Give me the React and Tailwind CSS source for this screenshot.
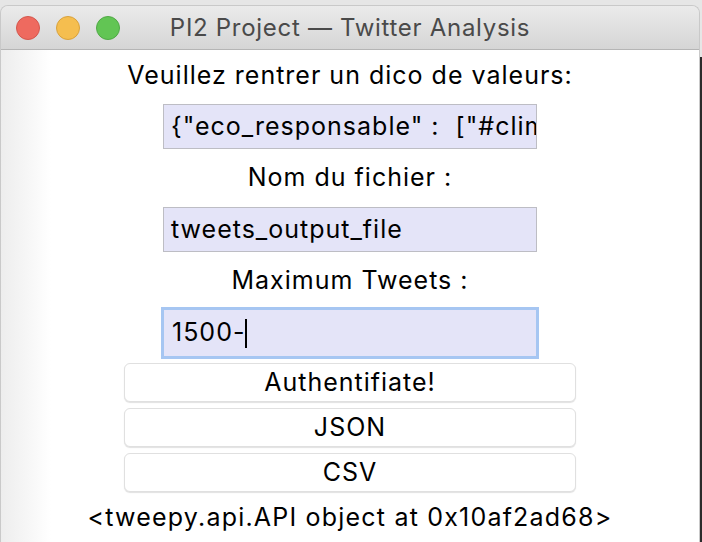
import React from 'react';

export default function App() {
  const buttons = ['Authentifiate!', 'JSON', 'CSV'];

  return (
    <div className="w-[702px] h-[542px] overflow-hidden bg-[#e6e6e6] flex pt-[5px]">
      <div className="w-[700px] h-full flex flex-col rounded-t-[8px] overflow-hidden border-t border-l border-r border-[#c9c9c9]">
        {/* title bar */}
        <div className="h-[44px] shrink-0 flex items-center relative bg-[linear-gradient(to_bottom,#ebebeb,#d5d5d5)] border-b border-[#b5b5b5]">
          <div className="flex items-center gap-[16px] pl-[15px]">
            <span className="w-[24px] h-[24px] rounded-full bg-[#ee6a5f] border border-[#d4574d]"></span>
            <span className="w-[24px] h-[24px] rounded-full bg-[#f5be4f] border border-[#d9a23c]"></span>
            <span className="w-[24px] h-[24px] rounded-full bg-[#62c554] border border-[#50a946]"></span>
          </div>
          <div className="absolute inset-0 flex items-center justify-center pointer-events-none">
            <span className="text-[24px] text-[#4a4a4a] font-['Inter',sans-serif] tracking-[0.7px]">
              PI2 Project — Twitter Analysis
            </span>
          </div>
        </div>

        {/* content */}
        <div className="flex-1 flex flex-col items-center text-black font-['Inter','Liberation_Sans',sans-serif] text-[25px] tracking-[1px] bg-[linear-gradient(to_right,#ededed,#ffffff_50px)]">
          <div className="mt-[12px] leading-[26px]">Veuillez rentrer un dico de valeurs:</div>
          <div className="mt-[16px] w-[374px] h-[45px] bg-[#e4e4f8] border border-[#bdbdc4] flex items-center px-[7px] overflow-hidden whitespace-nowrap">
            <span className="whitespace-pre">{'{"eco_responsable" :  ["#clim'}</span>
          </div>

          <div className="mt-[15px] leading-[26px]">Nom du fichier :</div>
          <div className="mt-[17px] w-[374px] h-[45px] bg-[#e4e4f8] border border-[#bdbdc4] flex items-center px-[7px]">
            tweets_output_file
          </div>

          <div className="mt-[15px] leading-[26px]">Maximum Tweets :</div>
          <div className="mt-[14px] w-[378px] h-[52px] bg-[#e4e4f8] border-[3px] border-[#a6c6f2] flex items-center px-[8px]">
            1500-<span className="w-[2px] h-[29px] bg-black"></span>
          </div>

          <div className="mt-[4px] flex flex-col gap-[6px]">
            {buttons.map((b) => (
              <button
                key={b}
                type="button"
                className="w-[452px] h-[39px] bg-white rounded-[6px] border border-[#e0e0e0] shadow-[0_1px_1px_rgba(0,0,0,0.12)] leading-none flex items-center justify-center"
              >
                {b}
              </button>
            ))}
          </div>

          <div className="mt-[12px] leading-[26px] tracking-[1.2px]">{'<tweepy.api.API object at 0x10af2ad68>'}</div>
        </div>
      </div>
      <div className="w-[2px] h-full flex flex-col">
        <div className="h-[52px] bg-[#e6e6e6]"></div>
        <div className="flex-1 bg-[#2b2b2b]"></div>
      </div>
    </div>
  );
}
